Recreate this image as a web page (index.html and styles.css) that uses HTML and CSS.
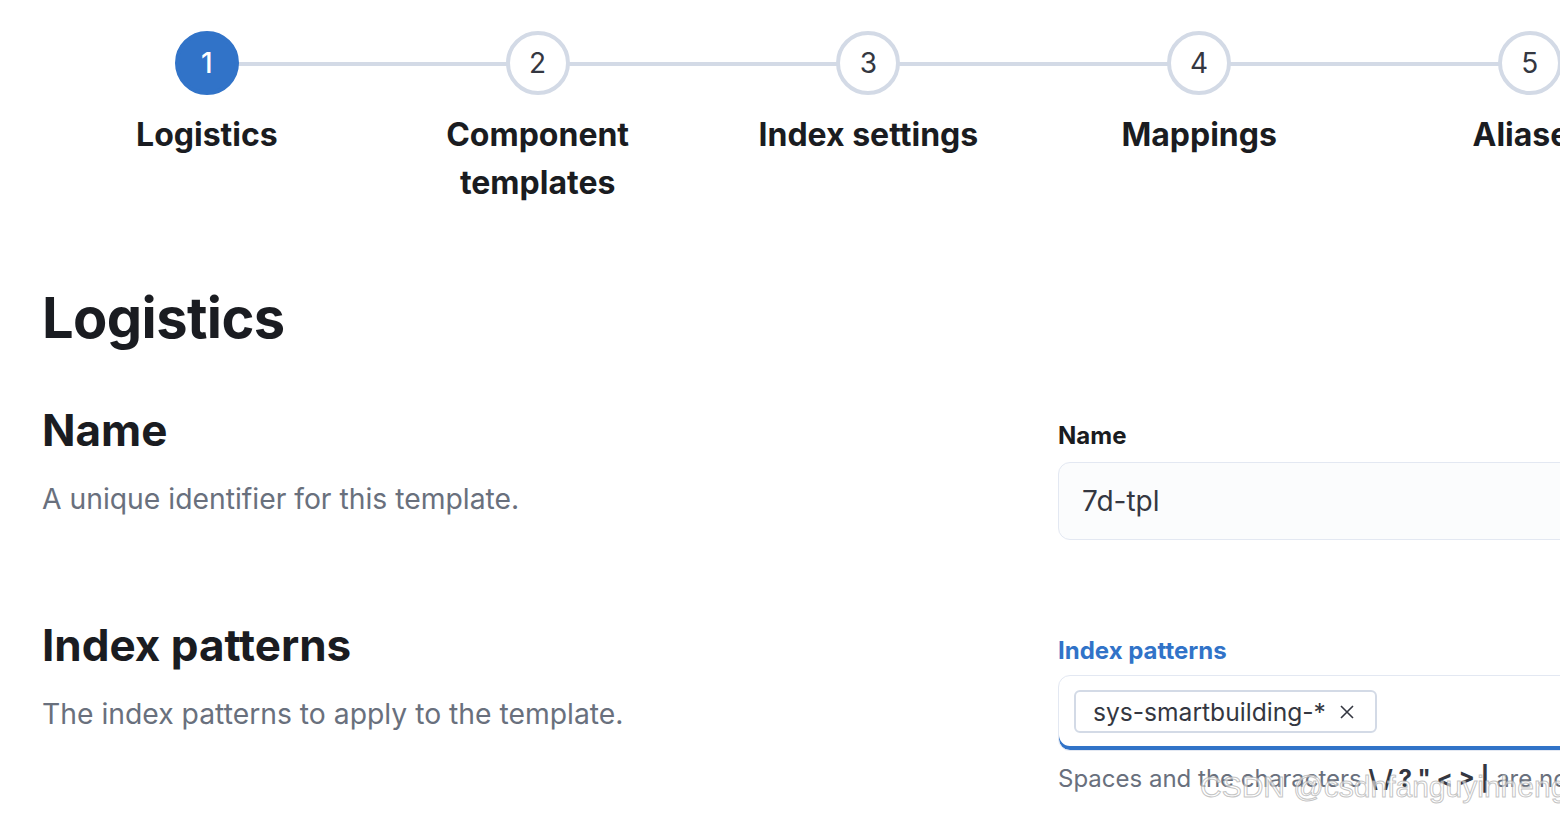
FILE: index.html
```html
<!DOCTYPE html>
<html>
<head>
<meta charset="utf-8">
<link rel="stylesheet" href="styles.css">
</head>
<body>
<div class="page">
  <ol class="steps">
    <li class="step step-current"><span class="step-num">1</span><span class="step-title">Logistics</span></li>
    <li class="step"><span class="step-num">2</span><span class="step-title">Component templates</span></li>
    <li class="step"><span class="step-num">3</span><span class="step-title">Index settings</span></li>
    <li class="step"><span class="step-num">4</span><span class="step-title">Mappings</span></li>
    <li class="step step-last"><span class="step-num">5</span><span class="step-title">Aliases</span></li>
  </ol>

  <main class="content">
    <h1 class="page-title">Logistics</h1>

    <section class="group">
      <div class="group-desc">
        <h2 class="group-title">Name</h2>
        <p class="group-text">A unique identifier for this template.</p>
      </div>
      <div class="group-field">
        <label class="field-label">Name</label>
        <div class="input">7d-tpl</div>
      </div>
    </section>

    <section class="group group-second">
      <div class="group-desc">
        <h2 class="group-title">Index patterns</h2>
        <p class="group-text">The index patterns to apply to the template.</p>
      </div>
      <div class="group-field">
        <label class="field-label field-label-focus">Index patterns</label>
        <div class="combo">
          <span class="pill">sys-smartbuilding-*
            <svg class="pill-x" viewBox="0 0 16 16" width="16" height="16"><path d="M2 2 L14 14 M14 2 L2 14" stroke="#343741" stroke-width="1.6" fill="none"/></svg>
          </span>
        </div>
        <p class="help">Spaces and the characters <strong>\ / ? " &lt; &gt; |</strong> are not allowed.</p>
      </div>
    </section>
  </main>
</div>
<div class="watermark">CSDN @csdnfanguyinheng</div>
</body>
</html>
```

FILE: styles.css
```css
html, body {
  margin: 0;
  padding: 0;
  background: #ffffff;
  overflow: hidden;
  width: 1560px;
  height: 816px;
}
body {
  font-family: Inter, "Noto Sans", sans-serif;
  color: #1a1c21;
  position: relative;
}
.page {
  width: 2000px;
}
.steps {
  list-style: none;
  margin: 0;
  padding: 31px 0 0 41.5px;
  display: flex;
}
.step {
  width: 330.75px;
  flex-shrink: 0;
  display: flex;
  flex-direction: column;
  align-items: center;
  position: relative;
}
.step::before,
.step::after {
  content: "";
  position: absolute;
  top: 31px;
  height: 4px;
  background: #d3dae6;
  width: 50%;
}
.step::before { left: 0; }
.step::after { right: 0; }
.step-current::before { display: none; }
.step-num {
  position: relative;
  z-index: 1;
  box-sizing: border-box;
  width: 64px;
  height: 64px;
  border-radius: 50%;
  border: 4px solid #d3dae6;
  background: #ffffff;
  color: #343741;
  font-size: 28px;
  display: flex;
  align-items: center;
  justify-content: center;
}
.step-current .step-num {
  background: #3173c8;
  border-color: #3173c8;
  color: #ffffff;
  font-weight: 500;
}
.step-title {
  margin-top: 16px;
  padding: 0 16px;
  font-size: 32px;
  line-height: 48px;
  font-weight: 700;
  text-align: center;
  color: #1a1c21;
}
.content {
  padding-left: 42px;
}
.page-title {
  margin: 71px 0 0 0;
  font-size: 56px;
  line-height: 80px;
  font-weight: 700;
  letter-spacing: -0.6px;
}
.group {
  display: flex;
  margin-top: 48px;
}
.group-second {
  margin-top: 81px;
}
.group-desc {
  width: 1016px;
  flex-shrink: 0;
}
.group-title {
  margin: 0;
  font-size: 44px;
  line-height: 48px;
  font-weight: 700;
}
.group-text {
  margin: 24px 0 0 0;
  font-size: 28.3px;
  line-height: 42px;
  color: #69707d;
}
.group-field {
  width: 800px;
  flex-shrink: 0;
  padding-top: 12px;
}
.field-label {
  display: block;
  font-size: 24px;
  line-height: 36px;
  font-weight: 700;
  color: #1a1c21;
  margin-bottom: 8px;
}
.field-label-focus {
  color: #3173c8;
  margin-bottom: 6px;
}
.input {
  box-sizing: border-box;
  height: 78px;
  border: 1px solid #e3e8f2;
  border-radius: 12px;
  background: #fbfcfd;
  padding-left: 23px;
  font-size: 28px;
  color: #343741;
  display: flex;
  align-items: center;
}
.combo {
  box-sizing: border-box;
  height: 76px;
  border: 1px solid #e3e8f2;
  border-radius: 12px;
  background: #ffffff;
  box-shadow: inset 0 -4px 0 #3173c8;
  padding: 14px 15px;
}
.pill {
  box-sizing: border-box;
  display: inline-flex;
  align-items: center;
  height: 43px;
  padding: 0 20px 0 17px;
  border: 2px solid #d3dae6;
  border-radius: 6px;
  background: #ffffff;
  font-size: 24.6px;
  color: #343741;
}
.pill-x {
  margin-left: 13px;
}
.help {
  margin: 10px 0 0 0;
  font-size: 24px;
  line-height: 36px;
  color: #69707d;
  white-space: nowrap;
}
.help strong {
  color: #343741;
  font-weight: 700;
}
.watermark {
  position: absolute;
  left: 1200px;
  top: 770px;
  font-family: "Liberation Sans", Arial, sans-serif;
  font-size: 30px;
  color: rgba(255, 255, 255, 0.6);
  -webkit-text-stroke: 1px rgba(170, 170, 170, 0.7);
  white-space: nowrap;
}
```
